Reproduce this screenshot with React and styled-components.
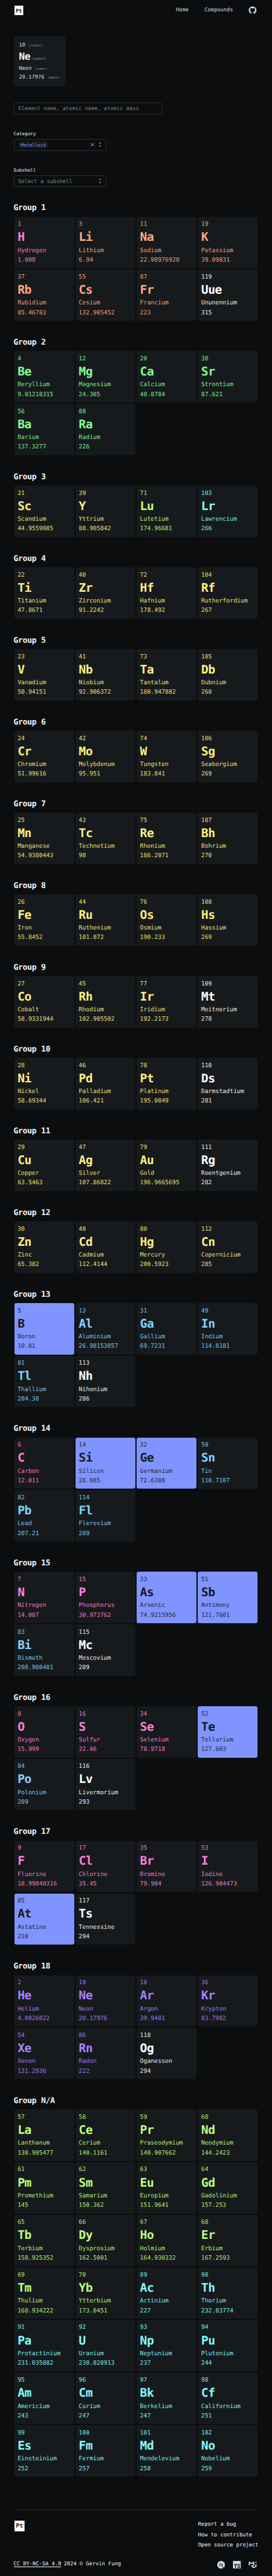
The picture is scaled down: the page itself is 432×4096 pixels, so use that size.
import React from "react";
import styled, { createGlobalStyle } from "styled-components";
import { SiGithub, SiMui, SiNextdotjs, SiTypescript } from "react-icons/si";

const u = (n) => `${(n * 0.52641).toFixed(3)}px`;

const GlobalStyle = createGlobalStyle`
  html, body { margin: 0; padding: 0; background: #0b0d0e; }
  *, *::before, *::after { box-sizing: border-box; }
  body {
    font-family: "DejaVu Sans Mono", "Liberation Mono", monospace;
    font-size: ${u(16)};
    letter-spacing: -0.002em;
    text-rendering: geometricPrecision;
    color: #cdd7e1;
    overflow: hidden;
  }
`;

const Page = styled.div`
  display: flow-root;
  height: 4096px;
  padding: 0 ${u(41)};
`;

const Header = styled.header`
  display: flex;
  align-items: center;
  justify-content: space-between;
  height: ${u(60)};
`;

const Logo = styled.div`
  display: flex;
  align-items: center;
  justify-content: center;
  width: ${(p) => u(p.$size)};
  height: ${(p) => u(p.$size)};
  margin: ${(p) => u(p.$top)} 0 0 ${u(2)};
  background: #fff;
  color: #111;
  font-size: ${(p) => u(p.$size * 0.56)};
  font-weight: 700;
  line-height: 1;
`;

const Nav = styled.nav`
  display: flex;
  align-items: center;
  margin-right: ${u(5)};
`;

const NavLink = styled.a`
  margin-right: ${u(48)};
  line-height: ${u(24)};
`;

const Icon = styled.span`
  display: flex;
  color: #cdd7e1;
  svg { width: ${u(23.5)}; height: ${u(23.5)}; display: block; }
`;

const Legend = styled.div`
  width: ${u(156)};
  height: ${u(153)};
  margin-top: ${u(48)};
  padding: ${u(14)} 0 0 ${u(16)};
  border-radius: ${u(8)};
  background: #171a1c;
  white-space: nowrap;
`;

const LegendRow = styled.div`
  height: ${u(27)};
  line-height: ${u(27)};
`;

const LegendSymbol = styled.div`
  height: ${u(38)};
  margin: ${u(3.9)} 0 ${u(1.1)};
  font-size: ${u(30)};
  font-weight: 700;
  line-height: ${u(38)};
  letter-spacing: -0.027em;
  color: #f0f4f8;
`;

const Hint = styled.small`
  margin-left: ${(p) => u(p.$gap ?? 9.6)};
  font-size: ${u(10.4)};
  font-weight: 400;
  line-height: 0;
  letter-spacing: ${(p) => (p.$tight ? u(-0.75) : "0")};
  color: #84898e;
`;

const Field = styled.div`
  display: flex;
  align-items: center;
  width: ${(p) => u(p.$width)};
  height: ${u(36)};
  padding: 0 ${u(12)};
  border: 1px solid #2b3035;
  border-radius: ${u(6)};
  color: #7d8488;
  white-space: nowrap;
`;

const Search = styled(Field)`
  margin-top: ${u(48)};
  margin-bottom: ${u(47.7)};
`;

const Control = styled.div`
  height: ${u(110)};
`;

const Label = styled.div`
  margin-bottom: ${u(5.5)};
  font-size: ${u(14)};
  line-height: ${u(21)};
  color: #f0f4f8;
`;

const Chip = styled.span`
  display: flex;
  align-items: center;
  height: ${u(24)};
  padding: 0 ${u(8)};
  border-radius: ${u(12)};
  background: #171a1c;
  color: #8094ff;
  font-size: ${u(14)};
`;

const FieldIcons = styled.span`
  display: flex;
  align-items: center;
  gap: ${u(2.5)};
  margin-left: auto;
  margin-right: ${u(-3.2)};
  svg { width: ${u(18.6)}; height: ${u(18.6)}; display: block; }
`;

const Groups = styled.main`
  margin-top: ${u(-2.3)};
`;

const Group = styled.section`
  padding-bottom: ${u(47.4)};
`;

const GroupTitle = styled.h2`
  margin: 0 0 ${u(8.6)};
  font-size: ${u(24)};
  font-weight: 700;
  line-height: ${u(36)};
  letter-spacing: -0.027em;
  color: #f0f4f8;
`;

const Grid = styled.div`
  display: grid;
  grid-template-columns: repeat(4, 1fr);
  grid-auto-rows: ${u(155)};
  gap: ${u(4)};
  padding: 0 ${u(2)};
`;

const palette = {
  n: "#ff80d5",
  a: "#ffaa80",
  e: "#80ff95",
  t: "#ffee80",
  l: "#bfff80",
  c: "#80ffff",
  p: "#80d4ff",
  m: "#8094ff",
  g: "#aa80ff",
  u: "#ffffff",
};

const Card = styled.article`
  min-width: 0;
  padding: ${u(10.3)} 0 0 ${u(10)};
  border-radius: ${u(6)};
  font-size: ${u(18)};
  line-height: ${u(27)};
  white-space: nowrap;
  background: ${(p) => (p.$kind === "m" ? palette.m : "#171a1c")};
  color: ${(p) => (p.$kind === "m" ? "#171a1c" : palette[p.$kind])};
`;

const Thin = styled.div`
  margin-bottom: ${(p) => u(p.$after ?? 0)};
  opacity: 0.9;
`;

const Symbol = styled.div`
  margin-bottom: ${u(3.3)};
  font-size: ${u(36)};
  font-weight: 700;
  line-height: ${u(45)};
  letter-spacing: -0.027em;
`;

const Footer = styled.footer`
  margin-top: ${u(50.6)};
  border-top: 1px solid #1d2022;
`;

const FooterTop = styled.div`
  display: flex;
  justify-content: space-between;
  align-items: flex-start;
  padding-top: ${u(27)};
`;

const FooterLinks = styled.div`
  display: flex;
  flex-direction: column;
  color: #f0f4f8;
  line-height: ${u(32)};
`;

const FooterBottom = styled.div`
  display: flex;
  justify-content: space-between;
  align-items: center;
  margin-top: ${u(32)};
  padding-right: ${u(5)};
  color: #f0f4f8;
`;

const Copyright = styled.div`
  margin-top: ${u(-8)};
  line-height: ${u(24)};
`;

const License = styled.a`
  margin-right: ${u(7.6)};
  border-bottom: 1px solid #f0f4f8;
`;

const Badges = styled.div`
  display: flex;
  gap: ${u(24.5)};
`;

const groups = [
  ["1", "1 H Hydrogen 1.008 n|3 Li Lithium 6.94 a|11 Na Sodium 22.98976928 a|19 K Potassium 39.09831 a|37 Rb Rubidium 85.46783 a|55 Cs Cesium 132.905452 a|87 Fr Francium 223 a|119 Uue Ununennium 315 u"],
  ["2", "4 Be Beryllium 9.01218315 e|12 Mg Magnesium 24.305 e|20 Ca Calcium 40.0784 e|38 Sr Strontium 87.621 e|56 Ba Barium 137.3277 e|88 Ra Radium 226 e"],
  ["3", "21 Sc Scandium 44.9559085 t|39 Y Yttrium 88.905842 t|71 Lu Lutetium 174.96681 l|103 Lr Lawrencium 266 c"],
  ["4", "22 Ti Titanium 47.8671 t|40 Zr Zirconium 91.2242 t|72 Hf Hafnium 178.492 t|104 Rf Rutherfordium 267 t"],
  ["5", "23 V Vanadium 50.94151 t|41 Nb Niobium 92.906372 t|73 Ta Tantalum 180.947882 t|105 Db Dubnium 268 t"],
  ["6", "24 Cr Chromium 51.99616 t|42 Mo Molybdenum 95.951 t|74 W Tungsten 183.841 t|106 Sg Seaborgium 269 t"],
  ["7", "25 Mn Manganese 54.9380443 t|43 Tc Technetium 98 t|75 Re Rhenium 186.2071 t|107 Bh Bohrium 270 t"],
  ["8", "26 Fe Iron 55.8452 t|44 Ru Ruthenium 101.072 t|76 Os Osmium 190.233 t|108 Hs Hassium 269 t"],
  ["9", "27 Co Cobalt 58.9331944 t|45 Rh Rhodium 102.905502 t|77 Ir Iridium 192.2173 t|109 Mt Meitnerium 278 u"],
  ["10", "28 Ni Nickel 58.69344 t|46 Pd Palladium 106.421 t|78 Pt Platinum 195.0849 t|110 Ds Darmstadtium 281 u"],
  ["11", "29 Cu Copper 63.5463 t|47 Ag Silver 107.86822 t|79 Au Gold 196.9665695 t|111 Rg Roentgenium 282 u"],
  ["12", "30 Zn Zinc 65.382 t|48 Cd Cadmium 112.4144 t|80 Hg Mercury 200.5923 t|112 Cn Copernicium 285 t"],
  ["13", "5 B Boron 10.81 m|13 Al Aluminium 26.98153857 p|31 Ga Gallium 69.7231 p|49 In Indium 114.8181 p|81 Tl Thallium 204.38 p|113 Nh Nihonium 286 u"],
  ["14", "6 C Carbon 12.011 n|14 Si Silicon 28.085 m|32 Ge Germanium 72.6308 m|50 Sn Tin 118.7107 p|82 Pb Lead 207.21 p|114 Fl Flerovium 289 p"],
  ["15", "7 N Nitrogen 14.007 n|15 P Phosphorus 30.973762 n|33 As Arsenic 74.9215956 m|51 Sb Antimony 121.7601 m|83 Bi Bismuth 208.980401 p|115 Mc Moscovium 289 u"],
  ["16", "8 O Oxygen 15.999 n|16 S Sulfur 32.06 n|34 Se Selenium 78.9718 n|52 Te Tellurium 127.603 m|84 Po Polonium 209 p|116 Lv Livermorium 293 u"],
  ["17", "9 F Fluorine 18.99840316 n|17 Cl Chlorine 35.45 n|35 Br Bromine 79.904 n|53 I Iodine 126.904473 n|85 At Astatine 210 m|117 Ts Tennessine 294 u"],
  ["18", "2 He Helium 4.0026022 g|10 Ne Neon 20.17976 g|18 Ar Argon 39.9481 g|36 Kr Krypton 83.7982 g|54 Xe Xenon 131.2936 g|86 Rn Radon 222 g|118 Og Oganesson 294 u"],
  ["N/A", "57 La Lanthanum 138.905477 l|58 Ce Cerium 140.1161 l|59 Pr Praseodymium 140.907662 l|60 Nd Neodymium 144.2423 l|61 Pm Promethium 145 l|62 Sm Samarium 150.362 l|63 Eu Europium 151.9641 l|64 Gd Gadolinium 157.253 l|65 Tb Terbium 158.925352 l|66 Dy Dysprosium 162.5001 l|67 Ho Holmium 164.930332 l|68 Er Erbium 167.2593 l|69 Tm Thulium 168.934222 l|70 Yb Ytterbium 173.0451 l|89 Ac Actinium 227 c|90 Th Thorium 232.03774 c|91 Pa Protactinium 231.035882 c|92 U Uranium 238.028913 c|93 Np Neptunium 237 c|94 Pu Plutonium 244 c|95 Am Americium 243 c|96 Cm Curium 247 c|97 Bk Berkelium 247 c|98 Cf Californium 251 c|99 Es Einsteinium 252 c|100 Fm Fermium 257 c|101 Md Mendelevium 258 c|102 No Nobelium 259 c"],
].map(([name, rows]) => ({
  name,
  elements: rows.split("|").map((row) => {
    const [index, symbol, title, mass, kind] = row.split(" ");
    return { index, symbol, title, mass, kind };
  }),
}));

const Clear = () => (
  <svg viewBox="0 0 24 24" fill="none" stroke="#cdd7e1" strokeWidth="2">
    <path d="M6 6 18 18M18 6 6 18" />
  </svg>
);

const Unfold = () => (
  <svg viewBox="0 0 24 24" fill="#9fa6ad">
    <path d="M12 5.83 15.17 9l1.41-1.41L12 3 7.41 7.59 8.83 9 12 5.83zm0 12.34L8.83 15l-1.41 1.41L12 21l4.59-4.59L15.17 15 12 18.17z" />
  </svg>
);

export default function App() {
  return (
    <>
      <GlobalStyle />
      <Page>
        <Header>
          <Logo $size={28} $top={4}>Pt</Logo>
          <Nav>
            <NavLink>Home</NavLink>
            <NavLink>Compounds</NavLink>
            <Icon><SiGithub /></Icon>
          </Nav>
        </Header>

        <Legend>
          <LegendRow>10<Hint>(index)</Hint></LegendRow>
          <LegendSymbol>Ne<Hint $gap={5} $tight>(symbol)</Hint></LegendSymbol>
          <LegendRow>Neon<Hint>(name)</Hint></LegendRow>
          <LegendRow>20.17976<Hint>(mass)</Hint></LegendRow>
        </Legend>

        <Search $width={450}>Element name, atomic name, atomic mass</Search>

        <Control>
          <Label>Category</Label>
          <Field $width={280}>
            <Chip>Metalloid</Chip>
            <FieldIcons><Clear /><Unfold /></FieldIcons>
          </Field>
        </Control>
        <Control>
          <Label>Subshell</Label>
          <Field $width={280}>
            Select a subshell
            <FieldIcons><Unfold /></FieldIcons>
          </Field>
        </Control>

        <Groups>
          {groups.map((group) => (
            <Group key={group.name}>
              <GroupTitle>Group {group.name}</GroupTitle>
              <Grid>
                {group.elements.map((el) => (
                  <Card key={el.index} $kind={el.kind}>
                    <Thin $after={3.7}>{el.index}</Thin>
                    <Symbol>{el.symbol}</Symbol>
                    <Thin $after={2}>{el.title}</Thin>
                    <Thin>{el.mass}</Thin>
                  </Card>
                ))}
              </Grid>
            </Group>
          ))}
        </Groups>

        <Footer>
          <FooterTop>
            <Logo $size={31.5} $top={7}>Pt</Logo>
            <FooterLinks>
              <a>Report a bug</a>
              <a>How to contribute</a>
              <a>Open source project</a>
            </FooterLinks>
          </FooterTop>
          <FooterBottom>
            <Copyright>
              <License>CC BY-NC-SA 4.0</License>2024 © Gervin Fung
            </Copyright>
            <Badges>
              <Icon><SiNextdotjs /></Icon>
              <Icon><SiTypescript /></Icon>
              <Icon><SiMui /></Icon>
            </Badges>
          </FooterBottom>
        </Footer>
      </Page>
    </>
  );
}
